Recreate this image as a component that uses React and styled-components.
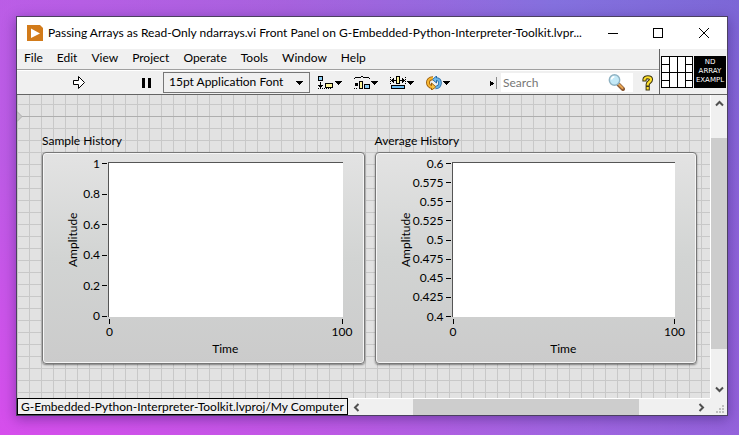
import React from "react";
import styled, { createGlobalStyle } from "styled-components";

const Global = createGlobalStyle`
  *, *::before, *::after { box-sizing: border-box; }
  body {
    margin: 0;
    font-family: Lato, "Open Sans", sans-serif;
    font-size: 12px;
    line-height: 16px;
    color: #000;
  }
  button, input, select { font: inherit; color: inherit; }
`;

const Desktop = styled.div`
  min-height: 100vh;
  display: flex;
  padding: 16px 11px 19px 16px;
  background:
    radial-gradient(ellipse at 0% 100%, rgba(214, 78, 236, 1), rgba(190, 90, 228, 0.7) 45%, rgba(150, 100, 220, 0) 110%),
    linear-gradient(90deg, #b95fe8, #9a66da 38%, #7277dc 75%, #7468d4);
`;

const Window = styled.main`
  flex: 1;
  min-width: 0;
  display: flex;
  flex-direction: column;
  border: 1px solid #4b4060;
  background: #f0f0f0;
  box-shadow: 0 3px 12px rgba(30, 10, 80, 0.4);
`;

const TitleBar = styled.header`
  display: flex;
  align-items: center;
  height: 32px;
  padding-left: 10px;
  background: #fff;
`;

const Title = styled.h1`
  flex: 1;
  min-width: 0;
  margin: 0 0 0 5px;
  font-size: 12px;
  font-weight: 400;
  line-height: 16px;
  white-space: nowrap;
  overflow: hidden;
`;

const IconButton = styled.button`
  display: flex;
  align-items: center;
  justify-content: center;
  flex: none;
  width: ${(p) => p.$w}px;
  height: ${(p) => p.$h || 22}px;
  padding: 0;
  border: 0;
  background: transparent;
`;

const HeaderArea = styled.div`
  display: flex;
  border-bottom: 1px solid #646464;
`;

const Bars = styled.div`
  flex: 1;
  min-width: 0;
`;

const MenuBar = styled.nav`
  display: flex;
  align-items: center;
  height: 21px;
  padding: 0 0 3px;
  border-bottom: 1px solid #a0a0a0;
`;

const MenuButton = styled.button`
  padding: 0 7px;
  border: 0;
  background: transparent;
`;

const Toolbar = styled.div`
  display: flex;
  align-items: center;
  height: 24px;
  border-top: 1px solid #fff;
`;

const RunGroup = styled.div`
  display: flex;
  justify-content: flex-end;
  gap: 46px;
  width: 146px;
  padding-right: 8px;
`;

const FontSelect = styled.div`
  display: grid;
  align-items: center;
  width: 147px;
  margin-right: 8px;

  select, svg { grid-area: 1 / 1; }
  select {
    appearance: none;
    height: 21px;
    padding: 0 20px 1px 5px;
    border: 1px solid #767676;
    border-radius: 0;
    background: #f0f0f0;
  }
  svg { justify-self: end; margin-right: 7px; pointer-events: none; }
`;

const ToolGroup = styled.div`
  display: flex;
  gap: 12px;

  button { gap: 1px; }
`;

const SearchArea = styled.div`
  display: flex;
  align-items: center;
  gap: 4px;
  margin-left: auto;
`;

const SearchBox = styled.label`
  display: flex;
  align-items: center;
  width: 132px;
  height: 19px;
  padding: 0 8px 0 2px;
  background: #fff;

  input {
    flex: 1;
    min-width: 0;
    padding: 0;
    border: 0;
    outline: 0;
    background: transparent;
  }
  input::placeholder { color: #767676; opacity: 1; }
`;

const PanePair = styled.div`
  display: flex;
  align-items: center;
  gap: 1px;
  padding: 0 1px;
  border-left: 1px solid #646464;
`;

const ViIcon = styled.div`
  display: flex;
  flex-direction: column;
  justify-content: center;
  width: 32px;
  height: 32px;
  background: #000;
  color: #fff;
  font: 7px/9px "DejaVu Sans", sans-serif;
  text-align: center;
`;

const Workspace = styled.div`
  flex: 1;
  display: grid;
  grid-template-columns: minmax(0, 1fr) 17px;
`;

const Canvas = styled.section`
  display: flex;
  align-items: flex-start;
  gap: 10px;
  padding: 37px 13px 33px 25px;
  background:
    linear-gradient(#aeaeae, #aeaeae) 0 21px / 100% 1px no-repeat,
    linear-gradient(90deg, #c8c8c8 1px, transparent 1px) 12px 0 / 12px 12px,
    linear-gradient(#c8c8c8 1px, transparent 1px) 0 9px / 12px 12px,
    #e2e2e2;
  position: relative;
`;

const OriginMark = styled.svg`
  position: absolute;
  left: 0;
  top: 16px;
`;

const ChartFigure = styled.figure`
  flex: 1;
  min-width: 0;
  margin: 0;

  figcaption { height: 20px; line-height: 18px; }
`;

const ChartPanel = styled.div`
  display: grid;
  grid-template-columns: 15px minmax(0, 1fr);
  height: 212px;
  padding: 9px 21px 0 22px;
  border: 1px solid #777;
  border-radius: 4px;
  background: linear-gradient(#e3e3e3, #d2d4d3 50%, #cbcbcb);
  box-shadow: inset 0 0 0 1px #f6f6f6, 0 1px 2px rgba(0, 0, 0, 0.45);
`;

const AxisName = styled.div`
  writing-mode: vertical-rl;
  transform: rotate(180deg);
  height: 156px;
  line-height: 15px;
  text-align: center;
`;

const PlotGrid = styled.div`
  display: grid;
  grid-template-columns: ${(p) => p.$scale}px minmax(0, 1fr);
  grid-template-rows: 155px 24px 16px;
`;

const YScale = styled.div`
  display: flex;
  flex-direction: column;
  justify-content: space-between;
  padding: 1px 1px 0 0;

  div {
    display: flex;
    align-items: center;
    justify-content: flex-end;
    gap: 2px;
    height: 1px;
  }
  div::after { content: ""; width: 5px; height: 1px; background: #000; }
`;

const Plot = styled.div`
  border-top: 1px solid #555;
  border-left: 1px solid #555;
  background: #fff;
`;

const XScale = styled.div`
  grid-column: 2;
  display: flex;
  justify-content: space-between;
  padding: 2px 0 0 1px;

  div {
    display: flex;
    flex-direction: column;
    align-items: center;
    width: 1px;
    line-height: 16px;
  }
  div::before { content: ""; flex: none; width: 1px; height: 5px; background: #000; }
`;

const XName = styled.div`
  grid-column: 2;
  text-align: center;
`;

const VScroll = styled.div`
  display: flex;
  flex-direction: column;
  border-left: 1px solid #fff;
`;

const HScroll = styled.div`
  flex: 1;
  display: flex;
  border-top: 1px solid #fff;
`;

const Space = styled.div`
  flex: ${(p) => p.$part};
`;

const Thumb = styled.div`
  flex: ${(p) => p.$part};
  background: #cdcdcd;
`;

const BottomRow = styled.footer`
  display: flex;
  height: 17px;
`;

const Target = styled.div`
  padding: 0 3px;
  border: 1px solid #000;
  line-height: 15px;
  white-space: nowrap;
`;

const Caret = () => (
  <svg width="7" height="4" shapeRendering="crispEdges" aria-hidden="true">
    <path d="M0 0h7v1H0zM1 1h5v1H1zM2 2h3v1H2zM3 3h1v1H3z" />
  </svg>
);

const AppLogo = () => (
  <svg width="16" height="16" aria-hidden="true">
    <path d="M0 0h13l3 3v13H0z" fill="#d27b1a" />
    <path d="M4 3.5L13 8.5L4 13z" fill="#fff" />
  </svg>
);

const AlignIcon = () => (
  <svg width="16" height="14" shapeRendering="crispEdges" aria-hidden="true">
    <rect x="0.5" y="0.5" width="4" height="4" fill="#8fd0f5" stroke="#000" />
    <path d="M2 6h1v4H2zM0 9h5v1H0zM1 10h3v1H1zM2 11h1v1H2z" />
    <path d="M0 12h1v1H0zM2 12h1v1H2zM4 12h1v1H4zM6 12h1v1H6zM8 12h1v1H8zM10 12h1v1h-1zM12 12h1v1h-1z" />
    <rect x="7.5" y="7.5" width="7" height="4" fill="#fdf59a" stroke="#000" />
  </svg>
);

const DistributeIcon = () => (
  <svg width="16" height="14" shapeRendering="crispEdges" aria-hidden="true">
    <path d="M0 2h1v1H0zM1 1h6v1H1zM7 0h2v1H7zM9 1h6v1H9zM15 2h1v1h-1z" />
    <path d="M1 7h3v3H1zM0 12h1v1H0zM2 12h1v1H2z" />
    <rect x="5.5" y="5.5" width="3" height="7" fill="#fdf59a" stroke="#000" />
    <rect x="10.5" y="8.5" width="5" height="4" fill="#8fd0f5" stroke="#000" />
  </svg>
);

const ResizeIcon = () => (
  <svg width="16" height="14" shapeRendering="crispEdges" aria-hidden="true">
    <path d="M0 1h1v1H0zM0 3h1v1H0zM0 5h1v1H0zM0 7h1v1H0zM15 1h1v1h-1zM15 3h1v1h-1zM15 5h1v1h-1zM15 7h1v1h-1z" />
    <path d="M1 4h5v1H1zM2 3h1v3H2zM3 2h1v5H3zM10 4h5v1h-5zM13 3h1v3h-1zM12 2h1v5h-1z" />
    <rect x="6.5" y="0.5" width="3" height="7" fill="#fdf59a" stroke="#000" />
    <rect x="1.5" y="9.5" width="13" height="3" fill="#6fc0f5" stroke="#000" />
  </svg>
);

const ReorderIcon = () => (
  <svg width="16" height="14" aria-hidden="true">
    <g fill="none">
      <path d="M7 2.2C3.5 2.2 2 4.5 2 6.5S3.6 11 6.5 11" stroke="#9a5c08" strokeWidth="4" />
      <path d="M9.5 3C13 3 14 5 14 7s-1.500 4.500-4.500 4.500" stroke="#2469a6" strokeWidth="3.600" />
    </g>
    <path d="M5.500 7L10 11L5.500 14z" fill="#f7c64a" stroke="#9a5c08" />
    <path d="M10.500 0L6.500 3.500L10.500 7z" fill="#7cc0ee" stroke="#2469a6" />
    <g fill="none">
      <path d="M7 2.200C3.500 2.200 2 4.500 2 6.500S3.600 11 6.500 11" stroke="#f7b733" strokeWidth="2.200" />
      <path d="M9.500 3C13 3 14 5 14 7s-1.500 4.500-4.500 4.500" stroke="#69b4e6" strokeWidth="2" />
    </g>
  </svg>
);

const MagnifierIcon = () => (
  <svg width="17" height="17" aria-hidden="true">
    <path d="M10.5 10.5L15 15" stroke="#8a5a36" strokeWidth="4" strokeLinecap="round" />
    <path d="M10.5 10L14.5 14" stroke="#e8a552" strokeWidth="2" strokeLinecap="round" />
    <circle cx="6.5" cy="6" r="5.2" fill="#c3e9f7" stroke="#8fb2c2" strokeWidth="1.4" />
    <path d="M3.4 5.5a3.5 3.5 0 0 1 3-2.8" fill="none" stroke="#fff" strokeWidth="1.6" />
  </svg>
);

const HelpIcon = () => (
  <svg width="12" height="16" aria-hidden="true">
    <g fill="none" strokeLinecap="square">
      <path d="M2.5 4.5C2.5 1.5 9 1.5 9 4.5C9 7 5.7 7 5.7 9.5M5.7 13v0.3" stroke="#3c3410" strokeWidth="4.2" />
      <path d="M2.5 4.5C2.5 1.5 9 1.5 9 4.5C9 7 5.7 7 5.7 9.5M5.7 13v0.3" stroke="#ffe02a" strokeWidth="2.2" />
    </g>
  </svg>
);

const ConnectorPane = () => (
  <svg width="32" height="32" shapeRendering="crispEdges" role="img" aria-label="Connector pane">
    <rect x="0.5" y="0.5" width="31" height="31" fill="#fff" stroke="#000" />
    <path d="M8.5 0v32M16.5 0v32M24.5 0v32M0 16.5h32M0 8.5h8M0 24.5h8M24 8.5h8M24 24.5h8" stroke="#000" />
  </svg>
);

const Chevron = ({ turn }) => (
  <svg width="9" height="9" aria-hidden="true">
    <path d="M1 6.5L4.5 3L8 6.5" transform={`rotate(${turn} 4.5 4.5)`} fill="none" stroke="#505050" strokeWidth="2" />
  </svg>
);

const Grip = () => (
  <svg width="17" height="17" shapeRendering="crispEdges" aria-hidden="true">
    <path d="M12 7h2v2h-2zM9 10h2v2H9zM12 10h2v2h-2zM6 13h2v2H6zM9 13h2v2H9zM12 13h2v2h-2z" fill="#bfbfbf" />
  </svg>
);

function Chart({ title, ticks, scale }) {
  return (
    <ChartFigure>
      <figcaption>{title}</figcaption>
      <ChartPanel>
        <AxisName>Amplitude</AxisName>
        <PlotGrid $scale={scale}>
          <YScale>{ticks.map((t) => <div key={t}>{t}</div>)}</YScale>
          <Plot />
          <XScale><div>0</div><div>100</div></XScale>
          <XName>Time</XName>
        </PlotGrid>
      </ChartPanel>
    </ChartFigure>
  );
}

const menus = ["File", "Edit", "View", "Project", "Operate", "Tools", "Window", "Help"];
const tools = [
  ["Align objects", AlignIcon],
  ["Distribute objects", DistributeIcon],
  ["Resize objects", ResizeIcon],
  ["Reorder", ReorderIcon],
];

export default function App() {
  return (
    <Desktop>
      <Global />
      <Window>
        <TitleBar>
          <AppLogo />
          <Title>Passing Arrays as Read-Only ndarrays.vi Front Panel on G-Embedded-Python-Interpreter-Toolkit.lvpr...</Title>
          <IconButton $w={45} $h={32} aria-label="Minimize">
            <svg width="10" height="10" shapeRendering="crispEdges"><path d="M0 5.5h10" stroke="#000" /></svg>
          </IconButton>
          <IconButton $w={45} $h={32} aria-label="Maximize">
            <svg width="10" height="10" shapeRendering="crispEdges"><rect x="0.5" y="0.5" width="9" height="9" fill="none" stroke="#000" /></svg>
          </IconButton>
          <IconButton $w={47} $h={32} aria-label="Close">
            <svg width="10" height="10"><path d="M0 0l10 10M10 0L0 10" stroke="#000" /></svg>
          </IconButton>
        </TitleBar>
        <HeaderArea>
          <Bars>
            <MenuBar>{menus.map((m) => <MenuButton key={m}>{m}</MenuButton>)}</MenuBar>
            <Toolbar>
              <RunGroup>
                <IconButton $w={24} aria-label="Run">
                  <svg width="12" height="13"><path d="M0.5 4.5h5v-4L11.5 6.5L5.5 12.5v-4h-5z" fill="#fff" stroke="#000" /></svg>
                </IconButton>
                <IconButton $w={18} aria-label="Pause">
                  <svg width="9" height="10" shapeRendering="crispEdges"><path d="M0 0h3v10H0zM6 0h3v10H6z" /></svg>
                </IconButton>
              </RunGroup>
              <FontSelect>
                <select aria-label="Text settings"><option>15pt Application Font</option></select>
                <Caret />
              </FontSelect>
              <ToolGroup>
                {tools.map(([name, Icon]) => (
                  <IconButton key={name} $w={24} aria-label={name}><Icon /><Caret /></IconButton>
                ))}
              </ToolGroup>
              <SearchArea>
                <svg width="7" height="12" shapeRendering="crispEdges" aria-hidden="true">
                  <path d="M0 4h1v5H0zM1 5h1v3H1zM2 5h1v3H2zM3 6h1v1H3z" />
                  <path d="M6 0h1v12H6z" fill="#8c8c8c" />
                </svg>
                <SearchBox>
                  <input type="text" placeholder="Search" aria-label="Search" />
                  <MagnifierIcon />
                </SearchBox>
                <IconButton $w={22} aria-label="Context help"><HelpIcon /></IconButton>
              </SearchArea>
            </Toolbar>
          </Bars>
          <PanePair>
            <ConnectorPane />
            <ViIcon><span>ND</span><span>ARRAY</span><span>EXAMPL</span></ViIcon>
          </PanePair>
        </HeaderArea>
        <Workspace>
          <Canvas>
            <OriginMark width="6" height="11" aria-hidden="true"><path d="M0 0.5L5 5.5L0 10.5z" fill="#c8c8c8" stroke="#aeaeae" /></OriginMark>
            <Chart title="Sample History" scale={28} ticks={["1", "0.8", "0.6", "0.4", "0.2", "0"]} />
            <Chart title="Average History" scale={39} ticks={["0.6", "0.575", "0.55", "0.525", "0.5", "0.475", "0.45", "0.425", "0.4"]} />
          </Canvas>
          <VScroll>
            <IconButton $w={16} $h={17} aria-label="Scroll up"><Chevron turn={0} /></IconButton>
            <Space $part={26} /><Thumb $part={211} /><Space $part={32} />
            <IconButton $w={16} $h={17} aria-label="Scroll down"><Chevron turn={180} /></IconButton>
          </VScroll>
        </Workspace>
        <BottomRow>
          <Target>G-Embedded-Python-Interpreter-Toolkit.lvproj/My Computer</Target>
          <HScroll>
            <IconButton $w={17} $h={16} aria-label="Scroll left"><Chevron turn={270} /></IconButton>
            <Space $part={48} /><Thumb $part={225} /><Space $part={54} />
            <IconButton $w={17} $h={16} aria-label="Scroll right"><Chevron turn={90} /></IconButton>
          </HScroll>
          <Grip />
        </BottomRow>
      </Window>
    </Desktop>
  );
}
